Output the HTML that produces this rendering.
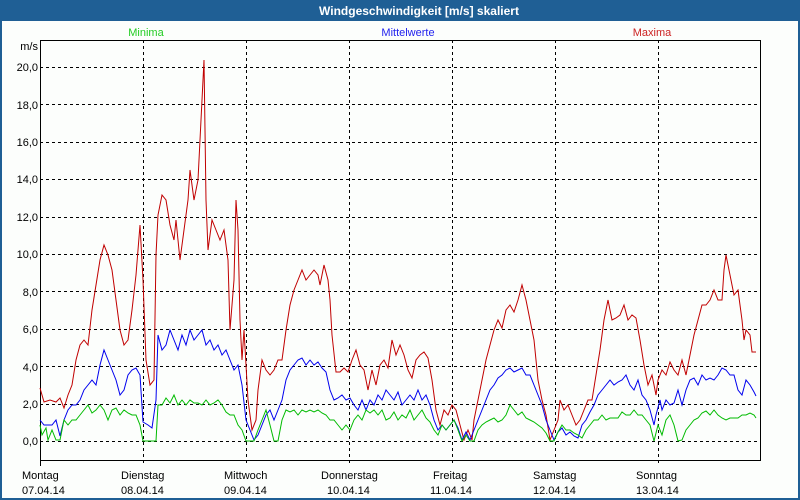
<!DOCTYPE html>
<html><head><meta charset="utf-8"><style>
html,body{margin:0;padding:0;width:800px;height:500px;overflow:hidden;background:#fcfefc}
svg{display:block}
text{font-family:"Liberation Sans",sans-serif;font-size:11px}
</style></head><body>
<svg width="800" height="500" viewBox="0 0 800 500">
<rect x="0" y="0" width="800" height="500" fill="#fcfefc"/>
<rect x="0" y="0" width="800" height="21" fill="#1f5f95"/>
<rect x="0" y="0" width="2" height="500" fill="#1f5f95"/>
<rect x="798" y="0" width="2" height="500" fill="#1f5f95"/>
<rect x="0" y="498" width="800" height="2" fill="#1f5f95"/>
<text x="419" y="15" text-anchor="middle" fill="#fff" font-weight="bold" style="font-size:12px">Windgeschwindigkeit [m/s] skaliert</text>
<text x="146" y="36" text-anchor="middle" fill="#22cc22">Minima</text>
<text x="408" y="36" text-anchor="middle" fill="#2222ee">Mittelwerte</text>
<text x="652" y="36" text-anchor="middle" fill="#cc2222">Maxima</text>
<g fill="#000" text-anchor="end">
<text x="38" y="50">m/s</text>
<text x="38" y="71">20,0</text><text x="38" y="109">18,0</text><text x="38" y="146">16,0</text>
<text x="38" y="183">14,0</text><text x="38" y="221">12,0</text><text x="38" y="258">10,0</text>
<text x="38" y="296">8,0</text><text x="38" y="333">6,0</text><text x="38" y="371">4,0</text>
<text x="38" y="408">2,0</text><text x="38" y="445">0,0</text>
</g>
<g stroke="#000" stroke-width="1" stroke-dasharray="3,3" fill="none">
<path d="M40 67.5H760M40 104.5H760M40 142.5H760M40 179.5H760M40 217.5H760M40 254.5H760M40 291.5H760M40 329.5H760M40 366.5H760M40 404.5H760M40 441.5H760"/>
<path d="M143.5 40V466M246.5 40V466M349.5 40V466M452.5 40V466M555.5 40V466M658.5 40V466"/>
</g>
<path d="M40.5 40.5H760.5V460.5H40.5Z" fill="none" stroke="#000"/>
<path d="M40.5 460V466" stroke="#000"/>
<polyline fill="none" stroke="#c00000" stroke-width="1" points="40,388 44,402 50,400 56,402 60,398 64,408 68,395 72,385 76,360 80,345 84,340 88,345 92,310 96,285 100,260 104,245 108,255 112,270 116,300 120,330 124,345 128,340 132,310 136,275 140,225 143,280 146,360 150,385 154,380 156,255 158,215 162,195 166,200 170,225 174,240 176,220 180,260 184,230 188,200 190,170 194,200 198,180 202,100 204,60 206,200 208,250 212,220 216,230 220,240 224,230 228,260 230,330 234,280 236,200 238,230 240,320 242,360 244,330 248,400 252,430 256,420 258,390 262,360 266,370 270,375 274,370 278,360 282,360 286,330 290,305 294,290 298,280 302,270 306,280 310,275 314,270 318,275 320,285 324,265 328,280 330,300 332,335 336,372 340,372 344,368 348,372 352,360 356,350 360,365 364,370 368,390 372,370 376,385 380,365 384,360 388,368 392,340 396,355 400,345 404,355 408,370 412,378 416,360 420,355 424,352 428,358 432,380 436,410 440,425 444,410 448,415 452,405 456,410 460,425 464,440 468,430 472,440 474,420 478,400 482,380 486,360 490,345 494,330 498,320 502,328 506,310 510,305 514,312 518,300 522,285 526,300 530,320 534,340 538,380 542,400 546,415 550,440 554,430 558,420 560,400 564,410 568,405 572,415 576,425 580,420 584,410 588,400 592,400 596,375 600,350 604,320 608,300 612,320 616,318 620,315 624,305 628,320 632,315 636,318 640,340 644,365 648,385 652,375 656,395 658,380 662,370 666,375 670,362 674,370 678,375 682,360 686,375 690,355 694,335 698,320 702,305 706,305 710,300 714,290 718,300 722,300 724,270 726,255 730,275 734,295 738,290 742,320 744,340 746,330 750,335 752,352 756,352"/>
<polyline fill="none" stroke="#0000ee" stroke-width="1" points="40,420 44,425 48,425 52,425 56,420 60,436 64,420 68,410 72,405 76,405 80,400 84,390 88,385 92,380 96,385 100,365 104,350 108,360 112,370 116,380 120,395 124,390 128,375 132,370 136,368 140,375 143,422 148,425 152,428 156,400 158,335 162,350 166,345 170,330 174,340 178,350 182,335 186,345 190,330 194,340 198,335 202,330 206,345 210,340 214,350 218,345 222,355 226,350 230,360 234,370 238,365 242,385 246,420 250,430 254,440 258,435 262,425 266,415 270,410 274,420 278,410 282,400 286,380 290,370 294,365 298,360 302,358 306,365 310,360 314,365 318,362 322,368 326,372 330,390 334,400 338,398 342,395 346,400 350,398 354,405 358,410 362,400 366,410 370,400 374,405 378,395 382,400 386,390 390,395 394,400 398,392 402,405 406,400 410,395 414,400 418,390 422,400 426,395 430,405 434,420 438,430 442,425 446,430 450,425 454,420 458,428 462,440 466,432 470,440 474,430 478,420 482,410 486,400 490,390 494,385 498,378 502,375 506,370 510,368 514,372 518,370 522,368 526,375 530,375 534,385 538,395 542,405 546,420 550,430 554,440 558,432 562,428 566,435 570,432 574,436 578,438 582,425 586,420 590,412 594,405 598,395 602,390 606,385 610,380 614,385 618,382 622,380 626,375 630,385 634,390 638,380 642,395 646,400 650,410 654,425 656,415 660,400 662,410 666,400 670,405 674,403 678,390 682,405 686,390 690,380 694,378 698,385 702,375 706,380 710,378 714,380 718,375 722,368 726,370 730,375 734,375 738,390 742,395 746,380 750,385 754,392 756,396"/>
<polyline fill="none" stroke="#00bb00" stroke-width="1" points="40,425 42,435 46,428 48,440 52,430 56,440 60,440 64,420 68,425 72,420 76,420 80,415 84,410 88,405 92,413 96,410 100,405 104,410 108,420 112,410 116,408 120,415 124,410 128,413 132,415 136,415 140,425 143,441 148,441 152,441 156,441 158,405 162,405 166,398 170,403 174,395 178,405 182,400 186,405 190,400 194,403 198,403 202,405 206,400 210,405 214,403 218,400 222,405 226,412 230,415 234,415 238,425 242,430 246,441 250,441 254,441 258,430 262,420 266,410 270,425 274,441 278,441 282,420 286,410 290,412 294,410 298,415 302,410 306,412 310,410 314,412 318,410 322,413 326,415 330,420 334,420 338,425 342,430 346,425 350,430 354,420 358,415 362,420 366,410 370,413 374,410 378,415 382,410 386,420 390,418 394,412 398,420 402,415 406,418 410,410 414,420 418,415 422,410 426,418 430,422 434,430 438,435 442,425 446,430 450,425 454,420 458,430 462,441 466,435 470,441 474,441 478,430 482,425 486,422 490,420 494,418 498,422 502,420 506,415 510,405 514,410 518,415 522,412 526,418 530,420 534,422 538,425 542,428 546,433 550,441 554,441 558,432 562,425 566,430 570,430 574,433 578,435 582,438 586,430 590,425 594,420 598,420 602,415 606,420 610,418 614,418 618,418 622,412 626,415 630,415 634,410 638,415 642,415 646,420 650,425 654,441 658,425 662,435 666,420 670,415 674,425 678,441 682,440 686,430 690,425 694,420 698,418 702,413 706,411 710,415 714,410 718,415 722,418 726,420 730,418 734,418 738,418 742,415 746,415 750,413 754,415 756,418"/>
<g fill="#000">
<text x="22" y="479">Montag</text><text x="22" y="494">07.04.14</text>
<text x="121" y="479">Dienstag</text><text x="121" y="494">08.04.14</text>
<text x="224" y="479">Mittwoch</text><text x="224" y="494">09.04.14</text>
<text x="321" y="479">Donnerstag</text><text x="327" y="494">10.04.14</text>
<text x="433" y="479">Freitag</text><text x="430" y="494">11.04.14</text>
<text x="533" y="479">Samstag</text><text x="533" y="494">12.04.14</text>
<text x="636" y="479">Sonntag</text><text x="636" y="494">13.04.14</text>
</g>
</svg>
</body></html>
